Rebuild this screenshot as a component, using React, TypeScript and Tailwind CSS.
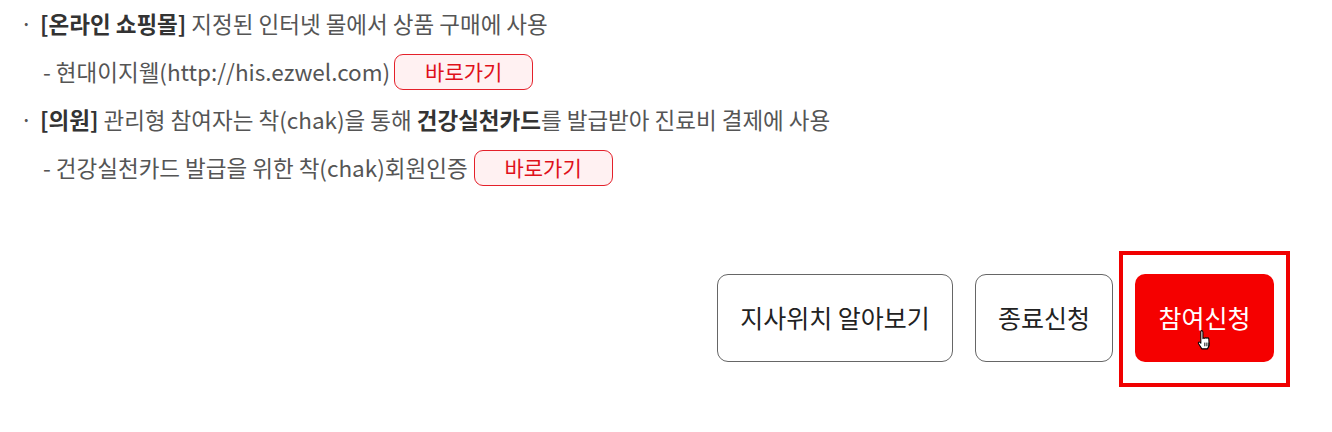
import React from "react";

const font = { fontFamily: '"Noto Sans CJK KR", "Noto Sans", sans-serif' };

function LinkBtn({ className = "" }: { className?: string }) {
  return (
    <span
      className={`inline-flex items-center justify-center w-[139px] h-[36px] rounded-[9px] border border-[#e4202a] bg-[#fff1f2] text-[#e0101a] text-[21px] ${className}`}
    >
      바로가기
    </span>
  );
}

function Cursor() {
  return (
    <svg width="17" height="23" viewBox="0 0 16 22" className="absolute left-[1196px] top-[329px]">
      <path
        d="M5 1.5c.9 0 1.5.6 1.5 1.5v6.2c.3-.6 1.4-.8 1.9-.2.2-.7 1.4-.9 1.9-.1.3-.6 1.5-.6 1.8.3l.3 5.5c0 2-1 3.5-1.6 4.3H5.5L2.2 13.8c-.5-.8.3-1.8 1.2-1.2l1.1 1V3c0-.9.6-1.5.5-1.5z"
        fill="#fff"
        stroke="#000"
        strokeWidth="1"
        strokeLinejoin="round"
      />
      <path d="M8.3 13v3.5M10.3 13v3.5M12.2 13v3.5" stroke="#000" strokeWidth="0.9" />
    </svg>
  );
}

export default function App() {
  return (
    <div className="relative w-[1332px] h-[432px] bg-white overflow-hidden" style={font}>
      <div className="pt-0 pl-[20px] text-[22.5px] text-[#555]">
        <div className="h-[48px] flex items-center">
          <span className="w-[20px]">·</span>
          <span className="font-bold text-[#333]">[온라인 쇼핑몰]</span>
          <span>&nbsp;지정된 인터넷 몰에서 상품 구매에 사용</span>
        </div>
        <div className="h-[48px] flex items-center pl-[23px]">
          <span>- 현대이지웰(http://his.ezwel.com)</span>
          <LinkBtn className="ml-[4px]" />
        </div>
        <div className="h-[48px] flex items-center">
          <span className="w-[20px]">·</span>
          <span className="font-bold text-[#333]">[의원]</span>
          <span>&nbsp;관리형 참여자는 착(chak)을 통해&nbsp;</span>
          <span className="font-bold text-[#333]">건강실천카드</span>
          <span>를 발급받아 진료비 결제에 사용</span>
        </div>
        <div className="h-[48px] flex items-center pl-[23px]">
          <span>- 건강실천카드 발급을 위한 착(chak)회원인증</span>
          <LinkBtn className="ml-[6px]" />
        </div>
      </div>

      <div className="absolute left-0 right-0 top-[274px] flex justify-end pr-[58px] gap-[22px] text-[25px] text-[#222]">
        <button className="w-[236px] h-[88px] rounded-[11px] border-[1.5px] border-[#666] bg-white">
          지사위치 알아보기
        </button>
        <button className="w-[138px] h-[88px] rounded-[11px] border-[1.5px] border-[#666] bg-white">
          종료신청
        </button>
        <button className="w-[139px] h-[88px] rounded-[10px] bg-[#f50000] text-white">
          참여신청
        </button>
      </div>

      <div className="absolute left-[1119px] top-[251px] w-[171px] h-[136px] border-4 border-[#f00000] pointer-events-none" />
      <Cursor />
    </div>
  );
}
